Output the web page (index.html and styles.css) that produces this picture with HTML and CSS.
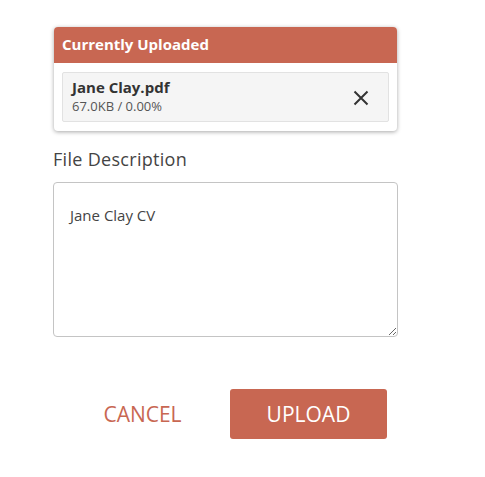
FILE: index.html
```html
<!DOCTYPE html>
<html>
<head>
<meta charset="utf-8">
<link rel="stylesheet" href="styles.css">
</head>
<body>
<div class="page">
  <section class="card">
    <div class="card-header">Currently Uploaded</div>
    <div class="card-body">
      <div class="file">
        <div class="file-info">
          <div class="file-name">Jane Clay.pdf</div>
          <div class="file-meta">67.0KB / 0.00%</div>
        </div>
        <button class="remove" aria-label="Remove">
          <svg width="16" height="16" viewBox="0 0 16 16"><path d="M1.5 1.5 L14.5 14.5 M14.5 1.5 L1.5 14.5" stroke="#333" stroke-width="2" fill="none"/></svg>
        </button>
      </div>
    </div>
  </section>
  <label class="label" for="desc">File Description</label>
  <textarea id="desc" class="desc">Jane Clay CV</textarea>
  <div class="actions">
    <button class="btn btn-cancel">CANCEL</button>
    <button class="btn btn-upload">UPLOAD</button>
  </div>
</div>
</body>
</html>
```
FILE: styles.css
```css
html, body {
  margin: 0;
  padding: 0;
  background: #fff;
}
body {
  font-family: "Open Sans", "Liberation Sans", sans-serif;
  color: #333;
}
.page {
  width: 344px;
  padding: 27px 0 0 53px;
  display: flex;
  flex-direction: column;
}
.card {
  margin-left: 1px;
  width: 343px;
  border-radius: 4px;
  background: #fff;
  box-shadow: 0 1px 4px rgba(0,0,0,0.35);
  overflow: hidden;
}
.card-header {
  background: #c86752;
  color: #fff;
  font-weight: 700;
  font-size: 15px;
  height: 36px;
  line-height: 35px;
  padding-left: 8px;
}
.card-body {
  padding: 9px 8px 9px 8px;
}
.file {
  display: flex;
  align-items: center;
  justify-content: space-between;
  height: 48px;
  border: 1px solid #e2e2e2;
  border-radius: 2px;
  background: #f5f5f5;
  padding: 0 19px 0 9px;
}
.file-info {
  display: flex;
  flex-direction: column;
}
.file-name {
  font-weight: 700;
  font-size: 15px;
  line-height: 19px;
  color: #333;
}
.file-meta {
  font-size: 13px;
  line-height: 19px;
  color: #555;
}
.remove {
  border: 0;
  background: none;
  padding: 0;
  display: flex;
  margin-top: 2px;
  cursor: pointer;
}
.label {
  margin-top: 16px;
  font-size: 18px;
  line-height: 25px;
  color: #444;
  letter-spacing: 0.3px;
}
.desc {
  margin-top: 10px;
  box-sizing: border-box;
  width: 345px;
  height: 155px;
  border: 1px solid #c4c4c4;
  border-radius: 4px;
  padding: 21px 16px;
  font-family: "Open Sans", "Liberation Sans", sans-serif;
  font-size: 15px;
  line-height: 22px;
  color: #444;
  outline: none;
}
.actions {
  margin-top: 52px;
  display: flex;
  justify-content: flex-end;
  gap: 9px;
  padding-right: 10px;
}
.btn {
  width: 157px;
  height: 50px;
  border: 0;
  border-radius: 3px;
  font-family: "Open Sans", "Liberation Sans", sans-serif;
  font-size: 21px;
  cursor: pointer;
}
.btn-cancel {
  background: transparent;
  color: #c86752;
}
.btn-upload {
  background: #c86752;
  color: #fff;
  font-weight: 500;
}
```
